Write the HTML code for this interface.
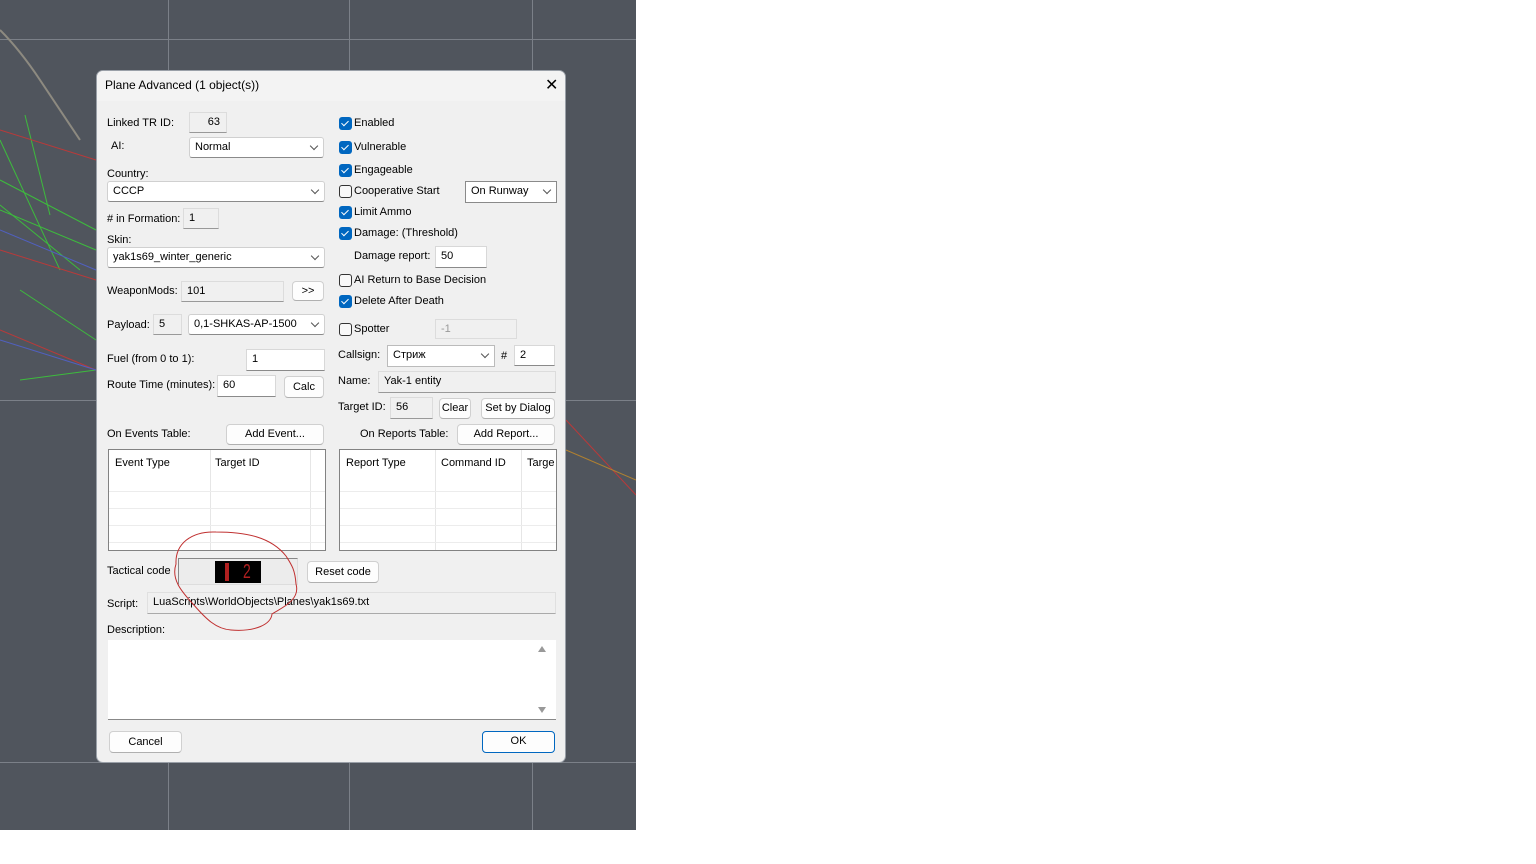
<!DOCTYPE html>
<html><head><meta charset="utf-8"><style>
*{box-sizing:border-box;margin:0;padding:0}
body{width:1536px;height:864px;background:#fff;position:relative;overflow:hidden;font-family:"Liberation Sans","DejaVu Sans",sans-serif;font-size:11px;color:#000}
.map{position:absolute;left:0;top:0;width:636px;height:830px;background:#50555d;overflow:hidden}
.a{position:absolute;white-space:nowrap}
.dlg{position:absolute;left:96px;top:70px;width:470px;height:693px;background:#f0f0f0;border:1px solid #9aa0a8;border-radius:7px;overflow:hidden}
.tb{position:absolute;left:0;top:0;width:100%;height:30px;background:#f3f3f3}
.in{position:absolute;background:#fff;border:1px solid #d8d8d8;border-bottom:1px solid #8a8a8a;padding:1px 5px;line-height:17px}
.ro{background:#f0f0f0;border:1px solid #dcdcdc;border-bottom:1px solid #999}
.cb{position:absolute;background:#fff;border:1px solid #d0d0d0;border-bottom:1px solid #8a8a8a;border-radius:3px;padding:1px 5px;line-height:17px}
.cb:after{content:"";position:absolute;right:6px;top:5px;width:5px;height:5px;border-right:1px solid #555;border-bottom:1px solid #555;transform:rotate(45deg)}
.btn{position:absolute;background:#fdfdfd;border:1px solid #d0d0d0;border-bottom:1px solid #b0b0b0;border-radius:4px;text-align:center;line-height:19px}
.ck{position:absolute;width:13px;height:13px;border-radius:3px;background:#0067c0}
.ck:after{content:"";position:absolute;left:4px;top:2px;width:3px;height:6px;border-right:1.5px solid #fff;border-bottom:1.5px solid #fff;transform:rotate(45deg)}
.uk{position:absolute;width:13px;height:13px;border-radius:3px;border:1px solid #333;background:#f8f8f8}
.tbl{position:absolute;background:#fff;border:1px solid #828282}
.hl{position:absolute;height:1px;background:#ececec}
.vl{position:absolute;width:1px;background:#e6e6e6}
</style></head><body>
<div class="map">
<div class="a" style="left:168px;top:0;width:1px;height:830px;background:#7b8088"></div>
<div class="a" style="left:349px;top:0;width:1px;height:830px;background:#7b8088"></div>
<div class="a" style="left:532px;top:0;width:1px;height:830px;background:#7b8088"></div>
<div class="a" style="left:0;top:39px;width:636px;height:1px;background:#7b8088"></div>
<div class="a" style="left:0;top:400px;width:636px;height:1px;background:#7b8088"></div>
<div class="a" style="left:0;top:762px;width:636px;height:1px;background:#7b8088"></div>
<svg class="a" style="left:0;top:0" width="636" height="830">
<path d="M0 30 Q20 50 40 80 T80 140" stroke="#8d8a80" stroke-width="2" fill="none"/>
<g stroke="#3dbb3d" stroke-width="1" fill="none">
<line x1="0" y1="140" x2="60" y2="270"/><line x1="25" y1="115" x2="50" y2="215"/><line x1="0" y1="180" x2="96" y2="230"/><line x1="0" y1="210" x2="96" y2="250"/><line x1="20" y1="290" x2="96" y2="340"/><line x1="20" y1="380" x2="96" y2="370"/><line x1="0" y1="205" x2="80" y2="270"/></g>
<g stroke="#b83a3a" stroke-width="1" fill="none">
<line x1="0" y1="130" x2="96" y2="160"/><line x1="0" y1="250" x2="96" y2="280"/><line x1="0" y1="330" x2="96" y2="370"/><line x1="566" y1="420" x2="636" y2="495"/></g>
<g stroke="#5060c0" stroke-width="1"><line x1="0" y1="340" x2="96" y2="370"/><line x1="0" y1="230" x2="96" y2="270"/></g>
<line x1="566" y1="450" x2="636" y2="480" stroke="#b08030"/>
</svg>
</div>
<div class="dlg">
<div class="tb"></div>
<div class="a" style="left:8px;top:7px;font-size:12px">Plane Advanced (1 object(s))</div>
<div class="a" style="left:448px;top:4px;font-size:16px;font-weight:300">✕</div>

<div class="a" style="left:10px;top:46px">Linked TR ID:</div>
<div class="in ro" style="left:92px;top:41px;width:38px;height:21px;text-align:right;padding-right:6px">63</div>
<div class="a" style="left:14px;top:69px">AI:</div>
<div class="cb" style="left:92px;top:66px;width:135px;height:21px">Normal</div>
<div class="a" style="left:10px;top:97px">Country:</div>
<div class="cb" style="left:10px;top:110px;width:218px;height:21px">CCCP</div>
<div class="a" style="left:10px;top:142px"># in Formation:</div>
<div class="in ro" style="left:86px;top:137px;width:36px;height:21px">1</div>
<div class="a" style="left:10px;top:163px">Skin:</div>
<div class="cb" style="left:10px;top:176px;width:218px;height:21px">yak1s69_winter_generic</div>
<div class="a" style="left:10px;top:214px">WeaponMods:</div>
<div class="in ro" style="left:84px;top:210px;width:103px;height:21px">101</div>
<div class="btn" style="left:195px;top:210px;width:32px;height:20px">&gt;&gt;</div>
<div class="a" style="left:10px;top:248px">Payload:</div>
<div class="in ro" style="left:56px;top:243px;width:29px;height:21px">5</div>
<div class="cb" style="left:91px;top:243px;width:137px;height:21px;overflow:hidden;padding-right:18px">0,1-SHKAS-AP-1500 + :</div>
<div class="a" style="left:10px;top:282px">Fuel (from 0 to 1):</div>
<div class="in" style="left:149px;top:278px;width:79px;height:22px">1</div>
<div class="a" style="left:10px;top:308px">Route Time (minutes):</div>
<div class="in" style="left:120px;top:304px;width:59px;height:22px">60</div>
<div class="btn" style="left:187px;top:305px;width:40px;height:22px;line-height:21px">Calc</div>

<div class="ck" style="left:242px;top:46px"></div><div class="a" style="left:257px;top:46px">Enabled</div>
<div class="ck" style="left:242px;top:70px"></div><div class="a" style="left:257px;top:70px">Vulnerable</div>
<div class="ck" style="left:242px;top:93px"></div><div class="a" style="left:257px;top:93px">Engageable</div>
<div class="uk" style="left:242px;top:114px"></div><div class="a" style="left:257px;top:114px">Cooperative Start</div>
<div class="cb" style="left:368px;top:110px;width:92px;height:22px;border:1px solid #8a8a8a;border-radius:0">On Runway</div>
<div class="ck" style="left:242px;top:135px"></div><div class="a" style="left:257px;top:135px">Limit Ammo</div>
<div class="ck" style="left:242px;top:156px"></div><div class="a" style="left:257px;top:156px">Damage: (Threshold)</div>
<div class="a" style="left:257px;top:179px">Damage report:</div>
<div class="in" style="left:338px;top:175px;width:52px;height:22px">50</div>
<div class="uk" style="left:242px;top:203px"></div><div class="a" style="left:257px;top:203px">AI Return to Base Decision</div>
<div class="ck" style="left:242px;top:224px"></div><div class="a" style="left:257px;top:224px">Delete After Death</div>
<div class="uk" style="left:242px;top:252px"></div><div class="a" style="left:257px;top:252px">Spotter</div>
<div class="in ro" style="left:338px;top:248px;width:82px;height:20px;color:#999;border-bottom-color:#dcdcdc">-1</div>
<div class="a" style="left:241px;top:278px">Callsign:</div>
<div class="cb" style="left:290px;top:274px;width:108px;height:22px;border-radius:0;border:1px solid #bbb">Стриж</div>
<div class="a" style="left:404px;top:279px">#</div>
<div class="in" style="left:417px;top:274px;width:41px;height:21px">2</div>
<div class="a" style="left:241px;top:304px">Name:</div>
<div class="in ro" style="left:281px;top:300px;width:178px;height:22px">Yak-1 entity</div>
<div class="a" style="left:241px;top:330px">Target ID:</div>
<div class="in ro" style="left:293px;top:326px;width:43px;height:22px">56</div>
<div class="btn" style="left:342px;top:327px;width:32px;height:21px">Clear</div>
<div class="btn" style="left:384px;top:327px;width:74px;height:21px">Set by Dialog</div>

<div class="a" style="left:10px;top:357px">On Events Table:</div>
<div class="btn" style="left:129px;top:353px;width:98px;height:21px">Add Event...</div>
<div class="a" style="left:263px;top:357px">On Reports Table:</div>
<div class="btn" style="left:360px;top:353px;width:98px;height:21px">Add Report...</div>

<div class="tbl" style="left:11px;top:378px;width:218px;height:102px">
<div class="a" style="left:6px;top:7px">Event Type</div><div class="a" style="left:106px;top:7px">Target ID</div>
<div class="vl" style="left:101px;top:0;height:100px"></div><div class="vl" style="left:201px;top:0;height:100px"></div>
<div class="hl" style="left:0;top:41px;width:216px"></div><div class="hl" style="left:0;top:58px;width:216px"></div><div class="hl" style="left:0;top:75px;width:216px"></div><div class="hl" style="left:0;top:92px;width:216px"></div>
</div>
<div class="tbl" style="left:242px;top:378px;width:218px;height:102px;overflow:hidden">
<div class="a" style="left:6px;top:7px">Report Type</div><div class="a" style="left:101px;top:7px">Command ID</div><div class="a" style="left:187px;top:7px">Targe</div>
<div class="vl" style="left:95px;top:0;height:100px"></div><div class="vl" style="left:181px;top:0;height:100px"></div>
<div class="hl" style="left:0;top:41px;width:216px"></div><div class="hl" style="left:0;top:58px;width:216px"></div><div class="hl" style="left:0;top:75px;width:216px"></div><div class="hl" style="left:0;top:92px;width:216px"></div>
</div>

<div class="a" style="left:10px;top:494px">Tactical code</div>
<div class="a" style="left:81px;top:487px;width:120px;height:27px;background:#ececec;border:1px solid #888;border-right-color:#ddd;border-bottom-color:#ddd"></div>
<div class="a" style="left:118px;top:490px;width:46px;height:22px;background:#000"></div>
<div class="a" style="left:128px;top:492px;width:4px;height:18px;background:#b02020"></div>
<div class="a" style="left:146px;top:489px;color:#b02020;font-size:20px;line-height:24px;font-family:'Liberation Sans Narrow','Liberation Sans',sans-serif;transform:scaleX(0.7);transform-origin:left">2</div>
<div class="btn" style="left:210px;top:490px;width:72px;height:22px;line-height:21px">Reset code</div>
<div class="a" style="left:10px;top:527px">Script:</div>
<div class="in ro" style="left:50px;top:521px;width:409px;height:22px;border-color:#e0e0e0 #e0e0e0 #aaa">LuaScripts\WorldObjects\Planes\yak1s69.txt</div>
<div class="a" style="left:10px;top:553px">Description:</div>
<div class="a" style="left:11px;top:569px;width:448px;height:80px;background:#fff;border-bottom:1px solid #888"></div>
<div class="a" style="left:441px;top:575px;width:0;height:0;border-left:4px solid transparent;border-right:4px solid transparent;border-bottom:6px solid #999"></div>
<div class="a" style="left:441px;top:636px;width:0;height:0;border-left:4px solid transparent;border-right:4px solid transparent;border-top:6px solid #999"></div>
<div class="btn" style="left:12px;top:660px;width:73px;height:22px;line-height:21px">Cancel</div>
<div class="btn" style="left:385px;top:660px;width:73px;height:22px;line-height:19px;border:1.5px solid #0067c0">OK</div>

<svg class="a" style="left:74px;top:458px" width="135" height="105"><path d="M45 3 C20 2 4 15 5 35 C0 50 10 62 22 75 C35 90 45 100 60 101 C85 103 100 95 101 85 C108 80 130 72 125 55 C124 40 120 35 115 27 C100 8 75 3 45 3 Z" stroke="#c03030" stroke-width="1" fill="none"/></svg>
</div>
</body></html>
